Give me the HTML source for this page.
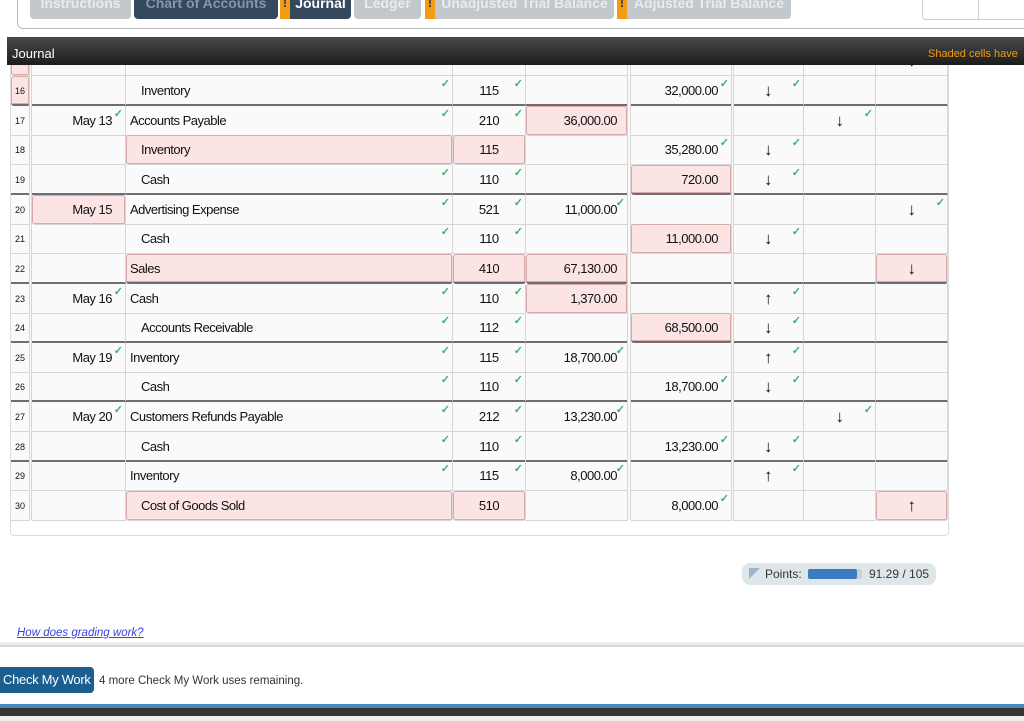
<!DOCTYPE html>
<html><head><meta charset="utf-8">
<style>
*{box-sizing:border-box;margin:0;padding:0}
body{width:1024px;height:721px;overflow:hidden;background:#fff;font-family:"Liberation Sans",sans-serif;position:relative}
.abs{position:absolute}
.tab{position:absolute;top:-10px;height:29px;border-radius:0 0 4px 4px;font-weight:bold;font-size:14px;color:#e9ecee;padding-top:5px;text-align:center;background:#c3c8cc}
.tab.dk{background:#34495e;color:#fff}
.tab .o{position:absolute;left:0;top:0;width:10px;height:29px;background:#f39c12;color:#34495e;font-size:14px;text-align:center;line-height:24px}
.row{position:absolute;left:10px;width:938px;height:30px}
.c{position:absolute;top:0;height:100%;border-bottom:1px solid #d6d6d6;border-right:1px solid #d6d6d6;font-size:13px;color:#111;line-height:30px;letter-spacing:-0.5px}
.d .c{border-bottom:2px solid #6e6e6e}
.c0{left:1px;width:19px;font-size:9px;text-align:center;letter-spacing:0}
.c1{left:22px;width:94px;text-align:right;padding-right:13px}
.c2{left:116px;width:327px;padding-left:4px}
.c2.i{padding-left:15px}
.c3{left:443px;width:73px;text-align:center}
.c4{left:516px;width:102px;text-align:right;padding-right:10px}
.c5{left:621px;width:101px;text-align:right;padding-right:13px}
.c6{left:723px;width:71px;text-align:center;font-size:17px}
.c7{left:794px;width:72px;text-align:center;font-size:17px}
.c8{left:866px;width:72px;text-align:center;font-size:17px}
.h{background:#fde4e4;box-shadow:inset 0 0 0 1px #d8aaaa;border-radius:3px}
.k:after{content:"\2713";position:absolute;right:2px;top:-7px;color:#37b46a;font-size:11px;font-weight:bold;letter-spacing:0}
</style></head><body>
<div class="abs" style="left:17px;top:-6px;width:1020px;height:35px;border:1px solid #bbb;border-radius:6px"></div>
<div class="tab" style="left:30px;width:101px">Instructions</div>
<div class="tab dk" style="left:134px;width:144px;color:#8596a8">Chart of Accounts</div>
<div class="tab dk" style="left:280px;width:71px;padding-left:10px"><span class="o">!</span>Journal</div>
<div class="tab" style="left:354px;width:67px">Ledger</div>
<div class="tab" style="left:425px;width:189px;padding-left:10px"><span class="o">!</span>Unadjusted Trial Balance</div>
<div class="tab" style="left:617px;width:174px;padding-left:10px"><span class="o">!</span>Adjusted Trial Balance</div>
<div class="abs" style="left:922px;top:-4px;width:110px;height:24px;border:1px solid #ccc;border-radius:4px"></div>
<div class="abs" style="left:978px;top:0;width:1px;height:20px;background:#ccc"></div>

<div class="abs" style="left:10px;top:60px;width:939px;height:476px;border:1px solid #ddd;border-radius:4px;background:#fff"></div>
<div class="abs" style="left:11px;top:60px;width:937px;height:460px;background:#fafafa"></div>
<div class="row" style="top:46px"><div class="c c0 h"></div><div class="c c1"></div><div class="c c2"></div><div class="c c3"></div><div class="c c4"></div><div class="c c5"></div><div class="c c6"></div><div class="c c7"></div><div class="c c8">↓</div></div>

<div class="row d" style="top:76px"><div class="c c0 h">16</div><div class="c c1"></div><div class="c c2 i k">Inventory</div><div class="c c3 k">115</div><div class="c c4"></div><div class="c c5 k">32,000.00</div><div class="c c6 k">↓</div><div class="c c7"></div><div class="c c8"></div></div>
<div class="row" style="top:106px"><div class="c c0">17</div><div class="c c1 k">May 13</div><div class="c c2 k">Accounts Payable</div><div class="c c3 k">210</div><div class="c c4 h">36,000.00</div><div class="c c5"></div><div class="c c6"></div><div class="c c7 k">↓</div><div class="c c8"></div></div>
<div class="row" style="top:135px"><div class="c c0">18</div><div class="c c1"></div><div class="c c2 i h">Inventory</div><div class="c c3 h">115</div><div class="c c4"></div><div class="c c5 k">35,280.00</div><div class="c c6 k">↓</div><div class="c c7"></div><div class="c c8"></div></div>
<div class="row d" style="top:165px"><div class="c c0">19</div><div class="c c1"></div><div class="c c2 i k">Cash</div><div class="c c3 k">110</div><div class="c c4"></div><div class="c c5 h">720.00</div><div class="c c6 k">↓</div><div class="c c7"></div><div class="c c8"></div></div>
<div class="row" style="top:195px"><div class="c c0">20</div><div class="c c1 h">May 15</div><div class="c c2 k">Advertising Expense</div><div class="c c3 k">521</div><div class="c c4 k">11,000.00</div><div class="c c5"></div><div class="c c6"></div><div class="c c7"></div><div class="c c8 k">↓</div></div>
<div class="row" style="top:224px"><div class="c c0">21</div><div class="c c1"></div><div class="c c2 i k">Cash</div><div class="c c3 k">110</div><div class="c c4"></div><div class="c c5 h">11,000.00</div><div class="c c6 k">↓</div><div class="c c7"></div><div class="c c8"></div></div>
<div class="row d" style="top:254px"><div class="c c0">22</div><div class="c c1"></div><div class="c c2 h">Sales</div><div class="c c3 h">410</div><div class="c c4 h">67,130.00</div><div class="c c5"></div><div class="c c6"></div><div class="c c7"></div><div class="c c8 h">↓</div></div>
<div class="row" style="top:284px"><div class="c c0">23</div><div class="c c1 k">May 16</div><div class="c c2 k">Cash</div><div class="c c3 k">110</div><div class="c c4 h">1,370.00</div><div class="c c5"></div><div class="c c6 k">↑</div><div class="c c7"></div><div class="c c8"></div></div>
<div class="row d" style="top:313px"><div class="c c0">24</div><div class="c c1"></div><div class="c c2 i k">Accounts Receivable</div><div class="c c3 k">112</div><div class="c c4"></div><div class="c c5 h">68,500.00</div><div class="c c6 k">↓</div><div class="c c7"></div><div class="c c8"></div></div>
<div class="row" style="top:343px"><div class="c c0">25</div><div class="c c1 k">May 19</div><div class="c c2 k">Inventory</div><div class="c c3 k">115</div><div class="c c4 k">18,700.00</div><div class="c c5"></div><div class="c c6 k">↑</div><div class="c c7"></div><div class="c c8"></div></div>
<div class="row d" style="top:372px"><div class="c c0">26</div><div class="c c1"></div><div class="c c2 i k">Cash</div><div class="c c3 k">110</div><div class="c c4"></div><div class="c c5 k">18,700.00</div><div class="c c6 k">↓</div><div class="c c7"></div><div class="c c8"></div></div>
<div class="row" style="top:402px"><div class="c c0">27</div><div class="c c1 k">May 20</div><div class="c c2 k">Customers Refunds Payable</div><div class="c c3 k">212</div><div class="c c4 k">13,230.00</div><div class="c c5"></div><div class="c c6"></div><div class="c c7 k">↓</div><div class="c c8"></div></div>
<div class="row d" style="top:432px"><div class="c c0">28</div><div class="c c1"></div><div class="c c2 i k">Cash</div><div class="c c3 k">110</div><div class="c c4"></div><div class="c c5 k">13,230.00</div><div class="c c6 k">↓</div><div class="c c7"></div><div class="c c8"></div></div>
<div class="row" style="top:461px"><div class="c c0">29</div><div class="c c1"></div><div class="c c2 k">Inventory</div><div class="c c3 k">115</div><div class="c c4 k">8,000.00</div><div class="c c5"></div><div class="c c6 k">↑</div><div class="c c7"></div><div class="c c8"></div></div>
<div class="row" style="top:491px"><div class="c c0">30</div><div class="c c1"></div><div class="c c2 i h">Cost of Goods Sold</div><div class="c c3 h">510</div><div class="c c4"></div><div class="c c5 k">8,000.00</div><div class="c c6"></div><div class="c c7"></div><div class="c c8 h">↑</div></div>
<div class="abs" style="left:29px;top:60px;width:3px;height:460px;border-left:1px solid #d6d6d6;border-right:1px solid #d6d6d6"></div>
<div class="abs" style="left:627px;top:60px;width:4px;height:460px;border-left:1px solid #d6d6d6;border-right:1px solid #d6d6d6"></div>
<div class="abs" style="left:731px;top:60px;width:3px;height:460px;border-left:1px solid #d6d6d6;border-right:1px solid #d6d6d6"></div>

<div class="abs" style="left:7px;top:37px;width:1017px;height:28px;background:linear-gradient(#4a4a4a,#1c1c1c)"></div>
<div class="abs" style="left:12px;top:46px;color:#fff;font-size:13px">Journal</div>
<div class="abs" style="left:928px;top:48px;color:#f39c12;font-size:11px;white-space:nowrap">Shaded cells have</div>

<div class="abs" style="left:742px;top:563px;width:194px;height:22px;background:#dfe6ea;border-radius:8px"></div>
<div class="abs" style="left:749px;top:568px;width:0;height:0;border-top:11px solid #9fb3c4;border-right:11px solid transparent"></div>
<div class="abs" style="left:765px;top:567px;font-size:12px;color:#333">Points:</div>
<div class="abs" style="left:808px;top:569px;width:54px;height:10px;background:#c9d3db;border-radius:2px"></div>
<div class="abs" style="left:808px;top:569px;width:49px;height:10px;background:#3b7bbf;border-radius:2px"></div>
<div class="abs" style="left:869px;top:567px;font-size:12px;color:#333">91.29 / 105</div>

<div class="abs" style="left:17px;top:627px;font-size:11.5px;color:#3344dd;font-style:italic;text-decoration:underline">How does grading work?</div>
<div class="abs" style="left:0;top:641px;width:1024px;height:6px;background:linear-gradient(#fff,#d0d0d0)"></div>
<div class="abs" style="left:0;top:667px;width:94px;height:26px;background:#1b5e90;border-radius:0 4px 4px 0;color:#fff;font-size:13px;line-height:26px;padding-left:3px;letter-spacing:-0.3px">Check My Work</div>
<div class="abs" style="left:99px;top:675px;font-size:11.5px;color:#333">4 more Check My Work uses remaining.</div>
<div class="abs" style="left:0;top:704px;width:1024px;height:4px;background:#4a88bb"></div>
<div class="abs" style="left:0;top:708px;width:1024px;height:8px;background:#333"></div>
<div class="abs" style="left:0;top:716px;width:1024px;height:5px;background:#eee"></div>
</body></html>
